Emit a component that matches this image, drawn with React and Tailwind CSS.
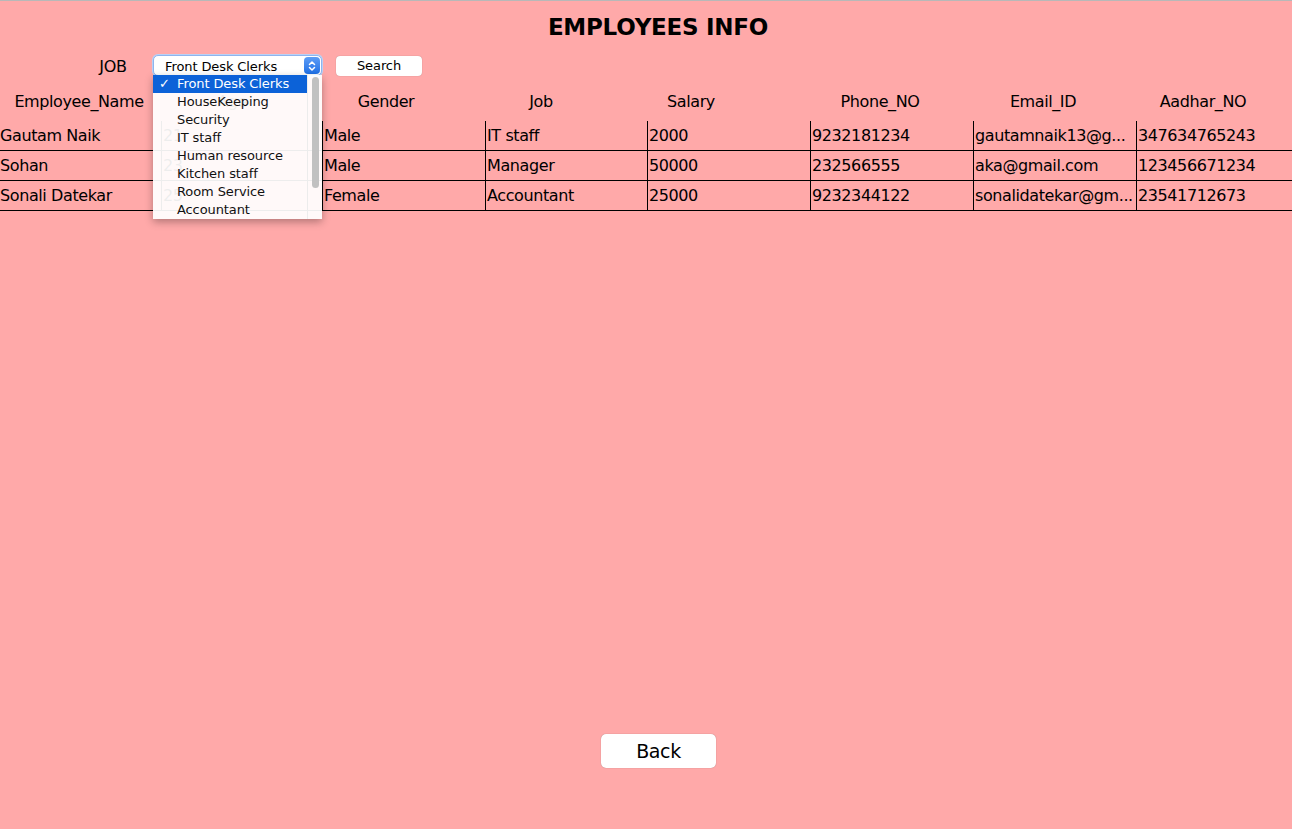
import React from "react";

const rows = [
  ["Gautam Naik", "21", "Male", "IT staff", "2000", "9232181234", "gautamnaik13@g...", "347634765243"],
  ["Sohan", "23", "Male", "Manager", "50000", "232566555", "aka@gmail.com", "123456671234"],
  ["Sonali Datekar", "25", "Female", "Accountant", "25000", "9232344122", "sonalidatekar@gm...", "23541712673"],
];

const jobs = [
  "Front Desk Clerks",
  "HouseKeeping",
  "Security",
  "IT staff",
  "Human resource",
  "Kitchen staff",
  "Room Service",
  "Accountant",
];

export default function App() {
  const font = { fontFamily: '"DejaVu Sans", Verdana, sans-serif' };
  return (
    <div
      className="w-[1292px] h-[829px] bg-[#ffa9a9] border-t border-[#b8b8b8] flex flex-col text-black overflow-hidden"
      style={font}
    >
      <h1 className="text-center font-bold text-[23px] leading-[26px] mt-[13px] pl-[24px] tracking-[-0.25px]">
        EMPLOYEES INFO
      </h1>

      <div className="flex items-center mt-[15px] h-[21px]">
        <div className="w-[80px] ml-[73px] text-center text-[16px] tracking-[-0.3px] pt-[2px]">JOB</div>
        <div className="relative w-[169px] h-[21px]">
          <div className="w-full h-full bg-white rounded-[5px] border border-[#8fb4ee] shadow-[0_0_0_1px_#b9d1f6] flex items-center justify-between pl-[11px] pr-[1px]">
            <span className="text-[13px] tracking-[-0.1px] leading-none pt-[1px]">Front Desk Clerks</span>
            <div className="w-[16px] h-[17px] rounded-[4px] bg-gradient-to-b from-[#5d9cf5] to-[#1c6fe6] flex items-center justify-center">
              <svg width="8" height="12" viewBox="0 0 8 12" fill="none" stroke="white" strokeWidth="1.5" strokeLinecap="round" strokeLinejoin="round">
                <path d="M1.5 4.5 L4 2 L6.5 4.5" />
                <path d="M1.5 7.5 L4 10 L6.5 7.5" />
              </svg>
            </div>
          </div>
          <div className="absolute left-0 top-[20px] w-[169px] h-[144px] bg-white/[0.93] shadow-[0_3px_8px_rgba(0,0,0,0.3)] flex z-10">
            <div className="flex-1 flex flex-col">
              {jobs.map((j, i) => (
                <div
                  key={j}
                  className={
                    i === 0
                      ? "h-[18px] flex items-center bg-[#0c62d8] text-white text-[13px] tracking-[-0.1px]"
                      : "h-[18px] flex items-center text-[#111] text-[13px] tracking-[-0.1px]"
                  }
                >
                  <span className="w-[24px] pl-[6px] text-[13px]">{i === 0 ? "✓" : ""}</span>
                  <span>{j}</span>
                </div>
              ))}
            </div>
            <div className="w-[15px] border-l border-[#ececec] flex justify-center pt-[2px]">
              <div className="w-[7px] h-[111px] rounded-full bg-[#c1c1c1]" />
            </div>
          </div>
        </div>
        <button className="ml-[14px] w-[86px] h-[20px] bg-white rounded-[4px] shadow-[0_0_1px_rgba(0,0,0,0.35)] text-[13px] tracking-[-0.1px] leading-none">
          Search
        </button>
      </div>

      <div className="flex mt-[16px] h-[20px] items-center text-[16px] tracking-[-0.4px] pl-[9px] whitespace-nowrap">
        <div className="w-[140px] text-center">Employee_Name</div>
        <div className="w-[140px] ml-[13px] text-center">Age</div>
        <div className="w-[140px] ml-[14px] text-center">Gender</div>
        <div className="w-[140px] ml-[15px] text-center">Job</div>
        <div className="w-[140px] ml-[10px] text-center">Salary</div>
        <div className="w-[140px] ml-[49px] text-center">Phone_NO</div>
        <div className="w-[140px] ml-[23px] text-center">Email_ID</div>
        <div className="w-[140px] ml-[20px] text-center">Aadhar_NO</div>
      </div>

      <div className="mt-[9px] flex flex-col">
        {rows.map((r, ri) => (
          <div
            key={ri}
            className="grid grid-cols-[161px_161px_163px_162px_163px_163px_163px_1fr] h-[30px] border-b border-black"
          >
            {r.map((c, ci) => (
              <div
                key={ci}
                className={
                  (ci === 0 ? "" : "border-l border-black pl-[1px] ") +
                  "flex items-center overflow-hidden whitespace-nowrap text-[16px] tracking-[-0.4px]"
                }
              >
                {c}
              </div>
            ))}
          </div>
        ))}
      </div>

      <div className="mt-auto mb-[61px] flex pl-[601px]">
        <button className="w-[115px] h-[34px] bg-white rounded-[5px] shadow-[0_0_1px_rgba(0,0,0,0.4)] text-[19px] tracking-[-0.4px] leading-none">
          Back
        </button>
      </div>
    </div>
  );
}
